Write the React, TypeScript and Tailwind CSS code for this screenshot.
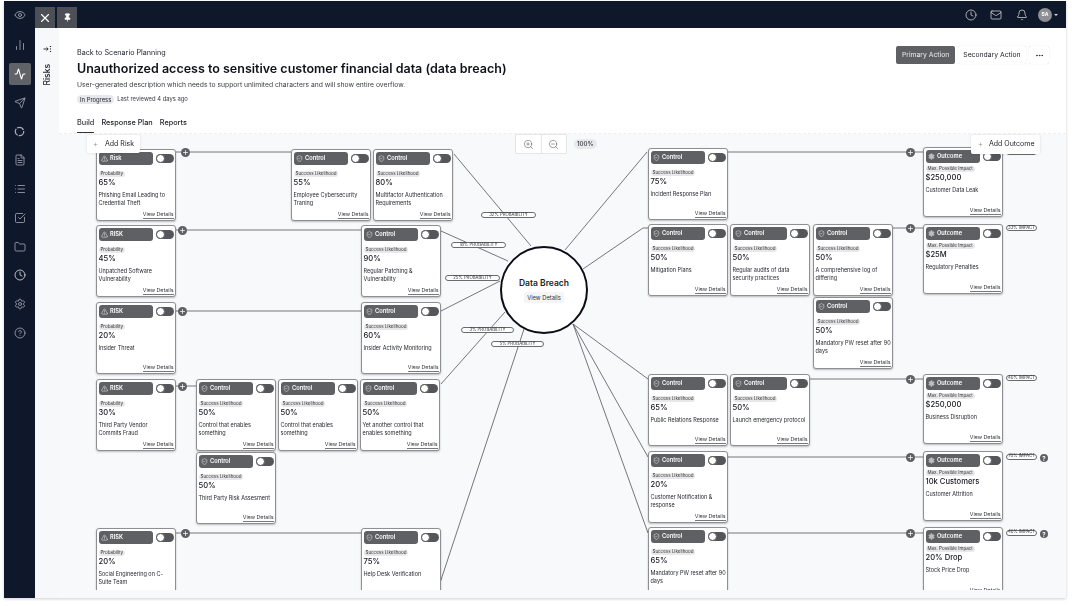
import {
  Activity,
  ChartNoAxesColumn,
  CircleHelp,
  Clock,
  FileText,
  Folder,
  List,
  Mail,
  Bell,
  MoreHorizontal,
  Pin,
  Plus,
  Send,
  Settings,
  ShieldCheck,
  SquareCheckBig,
  TriangleAlert,
  X,
  ZoomIn,
  ZoomOut,
  Eye,
} from "lucide-react"
import type { ComponentType } from "react"

type NodeKind = "risk" | "control" | "outcome"

type FlowNode = {
  x: number
  y: number
  kind: NodeKind
  title: string
  label: string
  value: string
  text: string
}

const nodes: FlowNode[] = [
  { x: 96, y: 150, kind: "risk", title: "Risk", label: "Probability", value: "65%", text: "Phishing Email Leading to Credential Theft" },
  { x: 96, y: 226, kind: "risk", title: "RISK", label: "Probability", value: "45%", text: "Unpatched Software Vulnerability" },
  { x: 96, y: 303, kind: "risk", title: "RISK", label: "Probability", value: "20%", text: "Insider Threat" },
  { x: 96, y: 380, kind: "risk", title: "RISK", label: "Probability", value: "30%", text: "Third Party Vendor Commits\u00a0Fraud" },
  { x: 96, y: 529, kind: "risk", title: "RISK", label: "Probability", value: "20%", text: "Social Engineering on C-Suite Team" },
  { x: 291, y: 150, kind: "control", title: "Control", label: "Success Likelihood", value: "55%", text: "Employee Cybersecurity Traning" },
  { x: 373, y: 150, kind: "control", title: "Control", label: "Success Likelihood", value: "80%", text: "Multifactor Authentication Requirements" },
  { x: 361, y: 226, kind: "control", title: "Control", label: "Success Likelihood", value: "90%", text: "Regular Patching & Vulnerability" },
  { x: 361, y: 303, kind: "control", title: "Control", label: "Success Likelihood", value: "60%", text: "Insider Activity Monitoring" },
  { x: 196, y: 380, kind: "control", title: "Control", label: "Success Likelihood", value: "50%", text: "Control that enables something" },
  { x: 278, y: 380, kind: "control", title: "Control", label: "Success Likelihood", value: "50%", text: "Control that enables something" },
  { x: 360, y: 380, kind: "control", title: "Control", label: "Success Likelihood", value: "50%", text: "Yet another control that enables something" },
  { x: 196, y: 453, kind: "control", title: "Control", label: "Success Likelihood", value: "50%", text: "Third Party Risk Assesment" },
  { x: 361, y: 529, kind: "control", title: "Control", label: "Success Likelihood", value: "75%", text: "Help Desk Verification" },
  { x: 648, y: 149, kind: "control", title: "Control", label: "Success Likelihood", value: "75%", text: "Incident Response Plan" },
  { x: 648, y: 225, kind: "control", title: "Control", label: "Success Likelihood", value: "50%", text: "Mitigation Plans" },
  { x: 730, y: 225, kind: "control", title: "Control", label: "Success Likelihood", value: "50%", text: "Regular audits of data security practices" },
  { x: 813, y: 225, kind: "control", title: "Control", label: "Success Likelihood", value: "50%", text: "A comprehensive log of differing" },
  { x: 813, y: 298, kind: "control", title: "Control", label: "Success Likelihood", value: "50%", text: "Mandatory PW reset after 90 days" },
  { x: 648, y: 375, kind: "control", title: "Control", label: "Success Likelihood", value: "65%", text: "Public Relations Response" },
  { x: 730, y: 375, kind: "control", title: "Control", label: "Success Likelihood", value: "50%", text: "Launch emergency protocol" },
  { x: 648, y: 452, kind: "control", title: "Control", label: "Success Likelihood", value: "20%", text: "Customer Notification & response" },
  { x: 648, y: 528, kind: "control", title: "Control", label: "Success Likelihood", value: "65%", text: "Mandatory PW reset after 90 days" },
  { x: 923, y: 148, kind: "outcome", title: "Outcome", label: "Max. Possible Impact", value: "$250,000", text: "Customer Data Leak" },
  { x: 923, y: 225, kind: "outcome", title: "Outcome", label: "Max. Possible Impact", value: "$25M", text: "Regulatory Penalties" },
  { x: 923, y: 375, kind: "outcome", title: "Outcome", label: "Max. Possible Impact", value: "$250,000", text: "Business Disruption" },
  { x: 923, y: 452, kind: "outcome", title: "Outcome", label: "Max. Possible Impact", value: "10k Customers", text: "Customer Attrition" },
  { x: 923, y: 528, kind: "outcome", title: "Outcome", label: "Max. Possible Impact", value: "20% Drop", text: "Stock Price Drop" },
]

// page coordinates, canvas starts at x=59 y=135
const lines = [
  "176,153 291,153",
  "176,231 361,231",
  "176,312 361,312",
  "176,387 196,387",
  "176,534 361,534",
  "454,155 531,247",
  "441,232 508,262",
  "441,312 500,282",
  "441,385 505,313",
  "438,590 524,330",
  "565,251 647,153",
  "583,270 643,229 648,229",
  "573,325 648,380",
  "573,325 648,458",
  "573,325 648,534",
  "728,153 923,153",
  "893,229 923,229",
  "810,380 923,380",
  "728,458 923,458",
  "728,534 923,534",
]

const pluses = [
  [185, 153], [182, 231], [182, 312], [182, 387], [185, 534], [910, 153], [910, 229], [910, 380], [910, 458], [910, 534],
]

const probabilities = [
  { x: 481, y: 213, w: 55, text: "32% PROBABILITY" },
  { x: 451, y: 243, w: 55, text: "18% PROBABILITY" },
  { x: 445, y: 276, w: 55, text: "25% PROBABILITY" },
  { x: 461, y: 328, w: 53, text: "3% PROBABILITY" },
  { x: 491, y: 342, w: 53, text: "5% PROBABILITY" },
]

const impacts = [
  { y: 150, text: "33% IMPACT", help: false },
  { y: 226, text: "33% IMPACT", help: false },
  { y: 376, text: "40% IMPACT", help: false },
  { y: 452, text: "70% IMPACT", help: true },
  { y: 528, text: "40% IMPACT", help: true },
]

function Card({ node }: { node: FlowNode }) {
  const Icon = node.kind === "risk" ? TriangleAlert : node.kind === "control" ? ShieldCheck : Settings
  const outcome = node.kind === "outcome"
  return (
    <div
      className={`absolute flex w-[80px] flex-col rounded-[3px] border border-[#8f8f93] bg-white p-[1.5px] shadow-[0_1px_2px_rgba(0,0,0,0.25)] ${outcome ? "h-[70px]" : "h-[72px]"}`}
      style={{ left: node.x - 59, top: node.y - 135 }}
    >
      <div className="flex items-center gap-[3px]">
        <div className="flex h-[13px] w-[55px] items-center gap-[2px] rounded-[3px] bg-[#5f6063] pl-[2.5px] text-[5.7px] font-semibold text-white">
          {outcome ? (
            <Icon size={7} strokeWidth={2} fill="#b9b9bc" stroke="#c4c4c7" />
          ) : (
            <Icon size={7} strokeWidth={1.6} />
          )}
          {node.title}
        </div>
        <div className="flex h-[9px] w-[18px] items-center rounded-full bg-[#55565a]">
          <div className="h-[9px] w-[9px] rounded-full border border-[#55565a] bg-white" />
        </div>
      </div>
      <div className={`w-fit rounded-full bg-[#e8e8ea] px-[2px] text-[4.5px] leading-[6px] text-[#333] ${outcome ? "mt-[3px]" : "mt-[6px]"}`}>
        {node.label}
      </div>
      <div className="text-[7.6px] font-medium leading-[11px] text-[#14161f]">{node.value}</div>
      <div className="-mr-[1.5px] mt-[3px] text-[5.5px] leading-[8.4px] text-[#26282e]">{node.text}</div>
      <div className="mt-auto self-end border-b border-[#77787c] text-[5.3px] leading-[7px] text-[#33353a]">View Details</div>
    </div>
  )
}

function SpinnerIcon() {
  return (
    <svg width="11" height="11" viewBox="0 0 12 12" fill="none" stroke="currentColor" strokeWidth="1.4">
      <circle cx="6" cy="6" r="4.6" strokeDasharray="8 1.2" />
    </svg>
  )
}

function CollapseIcon() {
  return (
    <svg width="9" height="8" viewBox="0 0 9 8" fill="none" stroke="#1c1e26" strokeWidth="0.9">
      <path d="M0.5 4H5M3.5 2.4 5.2 4 3.5 5.6" />
      <path d="M7.5 1v1M7.5 3.5v1M7.5 6v1" strokeWidth="1.2" />
    </svg>
  )
}

function RailIcon({ icon: Icon, active, bright }: { icon: ComponentType<{ size?: number; strokeWidth?: number }>; active?: boolean; bright?: boolean }) {
  return (
    <div
      className={`flex h-[22px] w-[22px] items-center justify-center rounded-[2px] ${
        active ? "bg-[#5f6368] text-white" : bright ? "text-[#e2e3e6]" : "text-[#a6abb5]"
      }`}
    >
      <Icon size={12} strokeWidth={active ? 2.2 : 1.6} />
    </div>
  )
}

export default function App() {
  return (
    <div className="h-[606px] w-[1072px] overflow-hidden bg-white pl-1 pt-[1px] font-['Inter',sans-serif] text-[#1c1e26]">
      <div className="flex h-[597px] w-[1062px] flex-col opacity-[0.999] shadow-[0_1px_3px_rgba(0,0,0,0.2)]">
        <div className="flex h-[27px] shrink-0 bg-[#0f172a]">
          <div className="flex w-[31px] items-center justify-center text-[#9aa0aa]">
            <Eye size={12} strokeWidth={1.8} />
          </div>
          <div className="mt-[6px] flex h-[21px] w-[20px] items-center justify-center bg-[#4c4f55] text-white">
            <X size={14} strokeWidth={2} />
          </div>
          <div className="ml-[2px] mt-[6px] flex h-[21px] w-[20px] items-center justify-center bg-[#4c4f55] text-white">
            <Pin size={9} fill="white" strokeWidth={1.6} />
          </div>
          <div className="ml-auto flex items-center pr-[8px] text-[#d5d7db]">
            <Clock size={12} strokeWidth={1.5} />
            <Mail size={12} strokeWidth={1.5} className="ml-[13px]" />
            <Bell size={12} strokeWidth={1.5} className="ml-[14px]" />
            <div className="ml-[10px] flex h-[14px] w-[14px] items-center justify-center rounded-full bg-[#8d8f94] text-[5px] font-bold text-white">SA</div>
            <div className="ml-[2px] h-0 w-0 border-x-[2px] border-t-[2px] border-x-transparent border-t-[#d5d7db]" />
          </div>
        </div>

        <div className="flex min-h-0 flex-1">
          <div className="flex w-[31px] shrink-0 flex-col items-center gap-[6.8px] bg-[#0f172a] pt-[6px]">
            <RailIcon icon={ChartNoAxesColumn} />
            <RailIcon icon={Activity} active />
            <RailIcon icon={Send} />
            <RailIcon icon={SpinnerIcon} />
            <RailIcon icon={FileText} />
            <RailIcon icon={List} />
            <RailIcon icon={SquareCheckBig} />
            <RailIcon icon={Folder} />
            <RailIcon icon={Clock} bright />
            <RailIcon icon={Settings} />
            <RailIcon icon={CircleHelp} />
          </div>

          <div className="flex w-[24px] shrink-0 flex-col items-center bg-[#f7f8fa] pt-[17px]">
            <CollapseIcon />
            <div className="mt-[11px] rotate-180 text-[8.5px] font-medium [writing-mode:vertical-rl]">Risks</div>
          </div>

          <div className="flex min-w-0 flex-1 flex-col">
            <div className="flex h-[106px] shrink-0 flex-col border-b border-dashed border-[#eceef1] pl-[18px] pr-[17px]">
              <div className="flex justify-between pt-[20px]">
                <div>
                  <div className="text-[7.2px] leading-[10px]">Back to Scenario Planning</div>
                  <div className="mt-[2px] text-[12.5px] font-semibold leading-[18px] text-[#10121a]">
                    Unauthorized access to sensitive customer financial data (data breach)
                  </div>
                  <div className="mt-[2px] text-[6.75px] leading-[10px] text-[#3a3c44]">
                    User-generated description which needs to support unlimited characters and will show entire overflow.
                  </div>
                  <div className="mt-[5px] flex items-center gap-[3px] text-[5.85px]">
                    <span className="rounded-full bg-[#e6e8ee] px-[3px] leading-[9px]">In Progress</span>
                    <span className="text-[#3a3c44]">Last reviewed 4 days ago</span>
                  </div>
                </div>
                <div className="-mt-[2px] flex h-[19px] items-start gap-[3px] text-[6.8px]">
                  <div className="flex h-[18px] items-center rounded-[2px] bg-[#5f6063] px-[5.5px] text-[#eee]">Primary Action</div>
                  <div className="flex h-[18px] items-center rounded-[2px] bg-white px-[5.5px] shadow-[0_0_1px_rgba(0,0,0,0.25)]">Secondary Action</div>
                  <div className="flex h-[18px] w-[20px] items-center justify-center rounded-[2px] bg-white shadow-[0_0_1px_rgba(0,0,0,0.25)]">
                    <MoreHorizontal size={9} />
                  </div>
                </div>
              </div>
              <div className="mt-auto flex gap-[7px] text-[7.3px] font-medium leading-[18px]">
                <span className="border-b border-[#333] text-[#33353a]">Build</span>
                <span>Response Plan</span>
                <span>Reports</span>
              </div>
            </div>

            <div className="relative min-h-0 flex-1 overflow-hidden bg-[#f8f9fb]">
              <div className="absolute inset-x-0 top-0 h-[456px] overflow-hidden">
                <svg className="absolute left-0 top-0" width="1007" height="456" viewBox="59 135 1007 456" fill="none">
                  {lines.map((l) => (
                    <polyline key={l} points={l} stroke="#55565a" strokeWidth="0.8" />
                  ))}
                </svg>

                {pluses.map(([x, y]) => (
                  <div
                    key={`${x}-${y}`}
                    className="absolute flex h-[9px] w-[9px] items-center justify-center rounded-full bg-[#5f6063] text-white"
                    style={{ left: x - 4.5 - 59, top: y - 4.5 - 135 }}
                  >
                    <Plus size={7} strokeWidth={2.5} />
                  </div>
                ))}

                {nodes.map((n) => (
                  <Card key={`${n.x}-${n.y}`} node={n} />
                ))}

                {probabilities.map((p) => (
                  <div
                    key={p.text}
                    className="absolute flex h-[6px] items-center justify-center rounded-full border border-[#6a6b70] bg-white text-[4.3px] text-[#333]"
                    style={{ left: p.x - 59, top: p.y - 135, width: p.w }}
                  >
                    {p.text}
                  </div>
                ))}

                {impacts.map((i) => (
                  <div key={i.y} className="absolute flex items-center gap-[3px]" style={{ left: 1006 - 59, top: i.y - 135 }}>
                    <div className="flex h-[6px] w-[31px] items-center justify-center rounded-full border border-[#6a6b70] bg-white text-[4.3px] text-[#333]">
                      {i.text}
                    </div>
                    {i.help && (
                      <div className="mt-[3px] flex h-[8px] w-[8px] items-center justify-center rounded-full bg-[#5f6063] text-[6px] font-bold text-white">?</div>
                    )}
                  </div>
                ))}

                <div className="absolute left-[441px] top-[112px] flex h-[88px] w-[88px] flex-col items-center justify-center rounded-full border-[2px] border-[#0c0e16] bg-white">
                  <div className="text-[8.5px] font-semibold leading-[12px]">Data Breach</div>
                  <div className="mt-[3px] rounded-[2px] bg-[#f4f5f7] px-[3.5px] text-[5.8px] leading-[11px] text-[#33353a]">View Details</div>
                </div>
              </div>

              <div className="absolute left-[28px] top-[1px] flex h-[18px] w-[53px] items-center gap-[7px] rounded-[2px] bg-white pl-[6px] text-[7px] whitespace-nowrap shadow-[0_0_3px_rgba(0,0,0,0.12)]">
                <Plus size={5} className="text-[#777]" />
                Add Risk
              </div>
              <div className="absolute left-[912px] top-[1px] flex h-[19px] w-[69px] items-center gap-[6px] rounded-[2px] bg-white pl-[7px] text-[7px] whitespace-nowrap shadow-[0_0_3px_rgba(0,0,0,0.12)]">
                <Plus size={5} className="text-[#777]" />
                Add Outcome
              </div>

              <div className="absolute left-[456px] top-0 flex h-[20px] w-[52px] rounded-[1px] border border-[#e4e5e8] bg-white text-[#55565a]">
                <div className="flex flex-1 items-center justify-center border-r border-[#e4e5e8]">
                  <ZoomIn size={11} strokeWidth={1.2} />
                </div>
                <div className="flex flex-1 items-center justify-center">
                  <ZoomOut size={11} strokeWidth={1.2} />
                </div>
              </div>
              <div className="absolute left-[515px] top-[5px] rounded-full bg-[#e8e9ec] px-[3px] text-[6.2px] font-medium leading-[10px] text-[#33353a]">100%</div>
            </div>
          </div>
        </div>
      </div>
    </div>
  )
}
